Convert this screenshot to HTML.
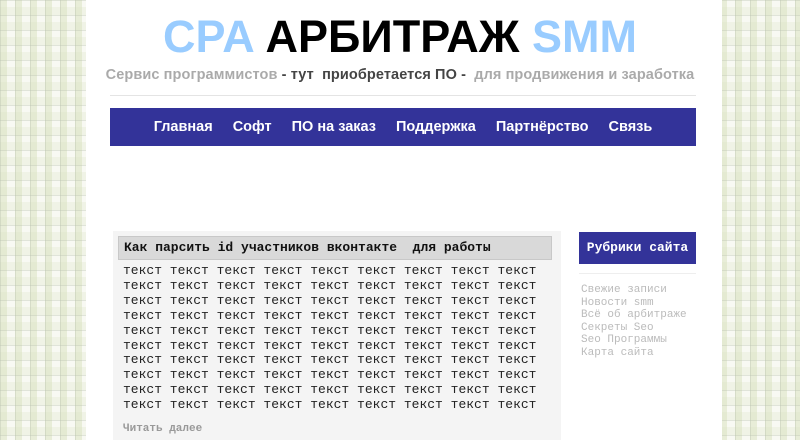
<!DOCTYPE html>
<html><head><meta charset="utf-8"><style>
html,body{margin:0;padding:0;width:800px;height:440px;overflow:hidden}
body{background-color:#f0f3e6;background-image:
linear-gradient(90deg,rgba(180,190,170,.35) 1px,transparent 1px),
linear-gradient(rgba(180,190,170,.35) 1px,transparent 1px),
linear-gradient(90deg,rgba(215,225,190,.5) 7px,transparent 7px),
linear-gradient(rgba(255,255,255,.5) 7px,transparent 7px);
background-size:15px 15px;font-family:"Liberation Sans",sans-serif;position:relative}
.page{position:absolute;left:86px;top:0;width:636px;height:440px;background:#fff}
.t{position:absolute;left:0;width:800px;text-align:center}
h1{margin:0;top:11px;font-size:45px;font-weight:bold;color:#000;line-height:52px}
.b{color:#99ccff}
.sub{top:67px;font-size:14.5px;font-weight:bold;color:#aaa;letter-spacing:.1px}
.sub span{color:#444}
.hr{position:absolute;left:110px;top:95px;width:586px;height:1px;background:#e4e4e4}
.nav{position:absolute;left:110px;top:108px;width:586px;height:38px;background:#333399;color:#fff;font-weight:bold;font-size:14.5px;line-height:38px;text-align:center}
.nav b{margin:0 10px}
.box{position:absolute;left:113px;top:231px;width:448px;height:209px;background:#f4f4f4}
.hd{position:absolute;left:5px;top:5px;width:427px;height:22px;background:#d9d9d9;border:1px solid #c8c8c8;font:bold 13px "Liberation Mono",monospace;line-height:22px;padding-left:5px;color:#111}
.txt{position:absolute;left:10px;top:33px;font:13px "Liberation Mono",monospace;line-height:14.9px;color:#222;white-space:pre}
.more{position:absolute;left:10px;top:192px;font:bold 11px "Liberation Mono",monospace;color:#999}
.rb{position:absolute;left:579px;top:232px;width:117px;height:32px;background:#333399;color:#fff;font:bold 13px "Liberation Mono",monospace;line-height:32px;text-align:center}
.rl{position:absolute;left:579px;top:273px;width:117px;height:1px;background:#eee}
.links{position:absolute;left:581px;top:284px;font:11px "Liberation Mono",monospace;line-height:12.6px;color:#bbb}
</style></head><body>
<div class="page"></div>
<h1 class="t"><span class="b">CPA</span> АРБИТРАЖ <span class="b">SMM</span></h1>
<div class="t sub">Сервис программистов <span>- тут&nbsp; приобретается ПО -</span>&nbsp; для продвижения и заработка</div>
<div class="hr"></div>
<div class="nav"><b>Главная</b><b>Софт</b><b>ПО на заказ</b><b>Поддержка</b><b>Партнёрство</b><b>Связь</b></div>
<div class="box">
<div class="hd">Как парсить id участников вконтакте&nbsp; для работы</div>
<div class="txt">текст текст текст текст текст текст текст текст текст
текст текст текст текст текст текст текст текст текст
текст текст текст текст текст текст текст текст текст
текст текст текст текст текст текст текст текст текст
текст текст текст текст текст текст текст текст текст
текст текст текст текст текст текст текст текст текст
текст текст текст текст текст текст текст текст текст
текст текст текст текст текст текст текст текст текст
текст текст текст текст текст текст текст текст текст
текст текст текст текст текст текст текст текст текст</div>
<div class="more">Читать далее</div>
</div>
<div class="rb">Рубрики сайта</div>
<div class="rl"></div>
<div class="links">Свежие записи<br>Новости smm<br>Всё об арбитраже<br>Секреты Seo<br>Seo Программы<br>Карта сайта</div>
</body></html>
